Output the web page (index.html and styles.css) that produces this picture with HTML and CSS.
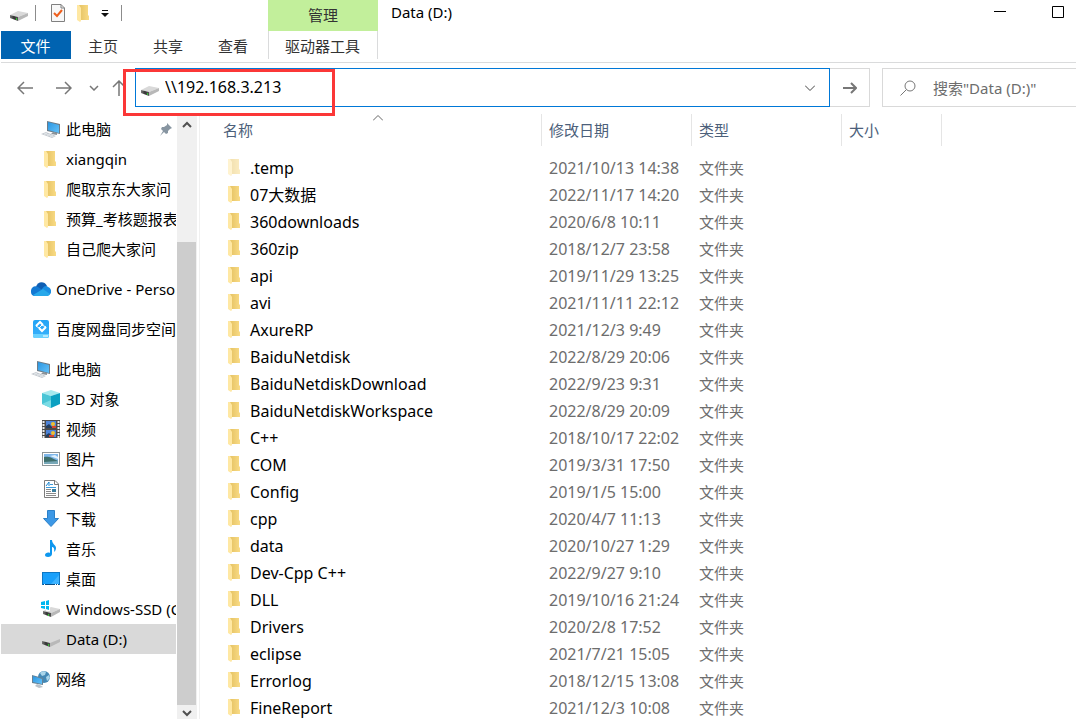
FILE: index.html
```html
<!doctype html>
<html lang="zh-CN">
<head>
    <title>Data (D:)</title>
    <meta charset="utf-8"/>
    <meta name="viewport" content="width=device-width, initial-scale=1"/>
    <link rel="stylesheet" href="styles.css">
</head>
<body>

<!-- shared icons -->
<svg class="sprite" aria-hidden="true">
    <defs>
        <linearGradient id="folderBack" x1="0" x2="1" y1="0" y2="0">
            <stop offset="0.2" stop-color="#e9c769"/>
            <stop offset="1" stop-color="#f9db85"/>
        </linearGradient>
        <linearGradient id="screen" x1="0" x2="1" y1="0" y2="1">
            <stop offset="0" stop-color="#2b95e0"/>
            <stop offset="1" stop-color="#63c2fa"/>
        </linearGradient>
        <linearGradient id="baidu" x1="0" x2="0" y1="0" y2="1">
            <stop offset="0" stop-color="#22a4f5"/>
            <stop offset="1" stop-color="#39b0fb"/>
        </linearGradient>
        <linearGradient id="driveFront" x1="0" x2="1" y1="0" y2="0">
            <stop offset="0" stop-color="#777"/>
            <stop offset="0.5" stop-color="#333"/>
            <stop offset="1" stop-color="#555"/>
        </linearGradient>
    </defs>
    <symbol id="folder" viewBox="0 0 12 17">
        <path d="M2 0H11V10L12 11V15H2Z" fill="url(#folderBack)"/>
        <path d="M0 0H2L4 3V16L3 17L0 15Z" fill="#ffe8a3"/>
    </symbol>
    <symbol id="drive" viewBox="0 0 20 20">
        <path d="M1 12L9 8L19 10L9 14Z" fill="#d9d9d9"/>
        <path d="M9 14L19 10V13L9 18Z" fill="#b8b8b8"/>
        <path d="M1 12L9 14V18L1 15Z" fill="url(#driveFront)"/>
        <path d="M7 15H8V17H7Z" fill="#32c932"/>
    </symbol>
    <symbol id="pc" viewBox="0 0 20 20">
        <path d="M6 2L19 5V15L6 12Z" fill="#6e7b86"/>
        <path d="M7 3L18 6V14L7 11Z" fill="url(#screen)"/>
        <path d="M12 13L16 14V16L10 15Z" fill="#8a9299"/>
        <path d="M0 15L5 13L15 17L11 19Z" fill="#c5cad0"/>
        <path d="M3 14L13 18M6 14L3 16M9 15L6 17M12 16L9 18" stroke="#eff2f4" stroke-width=".6" fill="none"/>
    </symbol>
</svg>

<div class="window">
    <header class="ribbon">
        <div class="ribbon-left">
            <div class="quick-access">
                <svg class="icon" viewBox="0 0 20 20"><use href="#drive"/></svg>
                <span class="divider"></span>
                <button class="qa-button" aria-label="属性">
                    <svg width="14" height="18" viewBox="0 0 14 18">
                        <path d="M.5 .5H10L13.500 4V17.500H.5Z" fill="#f8f8f8" stroke="#808080"/>
                        <path d="M10 .5V4H13.500" fill="none" stroke="#808080"/>
                        <path d="M3 9L6 12L11 6" fill="none" stroke="#ee5f1d" stroke-width="2"/>
                    </svg>
                </button>
                <button class="qa-button" aria-label="新建文件夹">
                    <svg class="folder" viewBox="0 0 12 17"><use href="#folder"/></svg>
                </button>
                <button class="qa-button" aria-label="自定义快速访问工具栏">
                    <svg width="8" height="8" viewBox="0 0 8 8">
                        <path d="M1 1.500H7" stroke="#111"/>
                        <path d="M0 4H8L4 8Z" fill="#111"/>
                    </svg>
                </button>
                <span class="divider divider-end"></span>
            </div>
            <nav class="tabs">
                <button class="tab tab-file">文件</button>
                <button class="tab">主页</button>
                <button class="tab">共享</button>
                <button class="tab">查看</button>
            </nav>
        </div>
        <div class="context">
            <div class="context-title">管理</div>
            <button class="tab tab-context">驱动器工具</button>
        </div>
        <div class="title">Data (D:)</div>
        <div class="window-buttons">
            <button aria-label="最小化"><svg width="12" height="12" viewBox="0 0 12 12"><path d="M0 5.500H12" stroke="#000"/></svg></button>
            <button aria-label="最大化"><svg width="12" height="12" viewBox="0 0 12 12"><path d="M.5 .5H11.500V11.500H.5Z" fill="none" stroke="#000"/></svg></button>
        </div>
    </header>

    <div class="toolbar">
        <div class="nav-buttons">
            <button aria-label="后退"><svg width="16" height="14" viewBox="0 0 16 14"><path d="M16 7H1M7 1L1 7L7 13" fill="none" stroke="#777" stroke-width="1.500"/></svg></button>
            <button aria-label="前进"><svg width="16" height="14" viewBox="0 0 16 14"><path d="M0 7H15M9 1L15 7L9 13" fill="none" stroke="#777" stroke-width="1.500"/></svg></button>
            <button aria-label="最近浏览的位置"><svg width="10" height="6" viewBox="0 0 10 6"><path d="M1 1L5 5L9 1" fill="none" stroke="#777" stroke-width="1.500"/></svg></button>
            <button aria-label="上移"><svg width="14" height="16" viewBox="0 0 14 16"><path d="M7 16V1M1 7L7 1L13 7" fill="none" stroke="#777" stroke-width="1.500"/></svg></button>
        </div>
        <div class="address">
            <svg class="icon" viewBox="0 0 20 20"><use href="#drive"/></svg>
            <input type="text" aria-label="地址" value="\\192.168.3.213">
            <button class="address-drop" aria-label="以前的位置"><svg width="10" height="6" viewBox="0 0 10 6"><path d="M0 .5L5 5.500L10 .5" fill="none" stroke="#444"/></svg></button>
            <div class="highlight"></div>
        </div>
        <button class="go" aria-label="转到"><svg width="14" height="12" viewBox="0 0 14 12"><path d="M0 6H13M8 1L13 6L8 11" fill="none" stroke="#777" stroke-width="2"/></svg></button>
        <label class="search">
            <svg width="16" height="16" viewBox="0 0 16 16"><circle cx="10" cy="6" r="5" fill="none" stroke="#777"/><path d="M6.500 9.500L.5 15.500" stroke="#777"/></svg>
            <input type="text" aria-label="搜索" placeholder='搜索"Data (D:)"'>
        </label>
    </div>

    <main class="content">
        <nav class="sidebar">
            <ul class="tree">
                <li class="sub"><a href="#"><svg class="icon" viewBox="0 0 20 20"><use href="#pc"/></svg>此电脑</a>
                    <svg class="pin" width="12" height="13" viewBox="0 0 12 13"><path d="M7 0L12 5L10 6L8 8V10L6 11L4 9L0 13L3 8L1 6L2 4H4L7 2Z" fill="#8795a1"/></svg>
                </li>
                <li class="sub"><a href="#"><svg class="folder" viewBox="0 0 12 17"><use href="#folder"/></svg>xiangqin</a></li>
                <li class="sub"><a href="#"><svg class="folder" viewBox="0 0 12 17"><use href="#folder"/></svg>爬取京东大家问</a></li>
                <li class="sub"><a href="#"><svg class="folder" viewBox="0 0 12 17"><use href="#folder"/></svg>预算_考核题报表</a></li>
                <li class="sub"><a href="#"><svg class="folder" viewBox="0 0 12 17"><use href="#folder"/></svg>自己爬大家问</a></li>
            </ul>
            <ul class="tree">
                <li><a href="#"><svg class="icon" viewBox="0 0 20 20">
                    <path d="M5 8C6 3 13 1 16 7L10 12Z" fill="#0f5fb4"/>
                    <path d="M0 13C-.5 9 3 6 7 8L13 12L4 17C1 17 0 15 0 13Z" fill="#1379d3"/>
                    <path d="M11 10C14 6 16 7 17 8C21 9 21 15 18 16L9 13Z" fill="#198de2"/>
                    <path d="M2 16L12 10L19 15C18 17 17 17 16 17H4C3 17 2 16 2 16Z" fill="#28a8ea"/>
                </svg>OneDrive - Personal</a></li>
            </ul>
            <ul class="tree">
                <li><a href="#"><svg class="icon" viewBox="0 0 20 20">
                    <rect x="2" y="1" width="16" height="18" rx="2" fill="url(#baidu)"/>
                    <path d="M2 15H18V17Q18 19 16 19H4Q2 19 2 17Z" fill="#69d1ff"/>
                    <path d="M12 17H17" stroke="#fff"/>
                    <path d="M5 7L9 3L12 6M15 8L11 12L8 9" fill="none" stroke="#fff" stroke-width="2"/>
                    <path d="M5 7L8 9L11 6L15 8" fill="none" stroke="#fff"/>
                </svg>百度网盘同步空间</a></li>
            </ul>
            <ul class="tree">
                <li><a href="#"><svg class="icon" viewBox="0 0 20 20"><use href="#pc"/></svg>此电脑</a></li>
                <li class="sub"><a href="#"><svg class="icon" viewBox="0 0 20 20">
                    <path d="M1 4L10 1L19 4L10 7Z" fill="#a6e9ee"/>
                    <path d="M1 4L10 7V19L1 15Z" fill="#49c5d6"/>
                    <path d="M10 7L19 4V15L10 19Z" fill="#0ba0c1"/>
                    <path d="M1 15L10 11V19Z" fill="#7bdce5"/>
                </svg>3D 对象</a></li>
                <li class="sub"><a href="#"><svg class="icon" viewBox="0 0 20 20">
                    <rect x="1" y="1" width="18" height="18" fill="#4b4b4b"/>
                    <path d="M2.500 2V19M17.500 2V19" stroke="#eee" stroke-width="2" stroke-dasharray="2 1"/>
                    <path d="M5 2H15V9H5ZM5 11H15V18H5Z" fill="#4d83d8"/>
                    <path d="M5 7L8 5L12 9H5ZM5 16L8 14L12 18H5Z" fill="#253e5e"/>
                    <circle cx="12" cy="5" r="2" fill="#f0c02d"/><circle cx="12" cy="14" r="2" fill="#f0c02d"/>
                    <path d="M11 7H15V9H11ZM8 16H13V18H8Z" fill="#d6452f"/>
                </svg>视频</a></li>
                <li class="sub"><a href="#"><svg class="icon" viewBox="0 0 20 20">
                    <rect x="1.500" y="3.500" width="17" height="13" fill="#fff" stroke="#8f9699"/>
                    <path d="M3 5H17V15H3Z" fill="#7fb7ea"/>
                    <path d="M3 8C7 7 10 8 17 12V13H3Z" fill="#3e6f6c"/>
                    <path d="M3 13L17 12V15H3Z" fill="#78a8b8"/>
                    <path d="M9 7L14 6L17 8V10Z" fill="#e1f1fc"/>
                </svg>图片</a></li>
                <li class="sub"><a href="#"><svg class="icon" viewBox="0 0 20 20">
                    <path d="M3.500 1.500H14L17.500 5V18.500H3.500Z" fill="#fff" stroke="#7c7c7c"/>
                    <path d="M13.500 2V5.500H17" fill="none" stroke="#7c7c7c"/>
                    <path d="M5 7L8 3V7" fill="none" stroke="#1b86d1"/>
                    <path d="M9 5.500H12M5 8.500H15" stroke="#3a9bdc"/>
                    <path d="M5 10.500H10M5 12.500H10M5 14.500H15M5 16.500H15" stroke="#8a8a8a"/>
                    <path d="M11 10H15V13H11Z" fill="#3b7e9d"/>
                </svg>文档</a></li>
                <li class="sub"><a href="#"><svg class="icon" viewBox="0 0 20 20">
                    <path d="M6.500 1.500H13.500V9.500H17.500L10 17.500L2.500 9.500H6.500Z" fill="#3c98e6" stroke="#2b80c9"/>
                </svg>下载</a></li>
                <li class="sub"><a href="#"><svg class="icon" viewBox="0 0 20 20">
                    <path d="M9 1H11C11 5 15 6 15 9C15 11 14 12 13 13C14 9 12 8 11 8V15C11 17 9 18 7 18C5 18 4 17 4 16C4 14 7 13 9 14Z" fill="#0e97ee"/>
                </svg>音乐</a></li>
                <li class="sub"><a href="#"><svg class="icon" viewBox="0 0 20 20">
                    <rect x="1.500" y="3.500" width="17" height="12" fill="#19a0fb" stroke="#0d77c4"/>
                    <path d="M10 15L18 6V15Z" fill="#3eb3ff"/>
                    <path d="M2 15.500H18" stroke="#0b4f85"/>
                    <path d="M3 15.500H4M14 15.500H15M16 15.500H17" stroke="#fff"/>
                </svg>桌面</a></li>
                <li class="sub"><a href="#"><svg class="icon" viewBox="0 0 20 20">
                    <path d="M2 12L10 8L19 10L10 14Z" fill="#d9d9d9"/>
                    <path d="M10 14L19 10V13L10 18Z" fill="#b8b8b8"/>
                    <path d="M2 12L10 14V18L2 15Z" fill="url(#driveFront)"/>
                    <path d="M7 15H8V17H7Z" fill="#32c932"/>
                    <path d="M0 2H4V6H0ZM5 1H9V6H5ZM0 7H4V11H0ZM5 7H9V12H5Z" fill="#fff"/>
                    <path d="M0 3L4 2V6H0ZM5 2L8 1V6H5ZM0 7H4V10L0 9ZM5 7H8V11L5 10Z" fill="#00b7f0"/>
                </svg>Windows-SSD (C:)</a></li>
                <li class="sub selected"><a href="#"><svg class="icon" viewBox="0 0 20 20"><use href="#drive"/></svg>Data (D:)</a></li>
            </ul>
            <ul class="tree">
                <li><a href="#"><svg class="icon" viewBox="0 0 20 20">
                    <circle cx="13" cy="8" r="6" fill="#4388b5"/>
                    <path d="M9 4C11 2 14 2 15 3L14 6L11 7ZM15 8L18 6L19 9L16 12Z" fill="#a9d5ea"/>
                    <path d="M1 6L12 9V16L1 14Z" fill="#668296"/>
                    <path d="M2 7L11 10V15L2 13Z" fill="url(#screen)"/>
                    <path d="M6 15L9 16L12 18L8 19L4 17Z" fill="#b9c2c9"/>
                </svg>网络</a></li>
            </ul>
        </nav>

        <div class="scrollbar">
            <button aria-label="向上滚动"><svg width="10" height="7" viewBox="0 0 10 7"><path d="M1 6L5 2L9 6" fill="none" stroke="#505050" stroke-width="2"/></svg></button>
            <div class="track"><div class="thumb"></div></div>
            <button aria-label="向下滚动"><svg width="10" height="7" viewBox="0 0 10 7"><path d="M1 1L5 5L9 1" fill="none" stroke="#505050" stroke-width="2"/></svg></button>
        </div>

        <section class="files">
            <table>
                <colgroup>
                    <col class="col-name"><col class="col-date"><col class="col-type"><col class="col-size"><col>
                </colgroup>
                <thead>
                    <tr>
                        <th>名称<svg class="sort" width="10" height="6" viewBox="0 0 10 6"><path d="M0 5.500L5 .5L10 5.500" fill="none" stroke="#666"/></svg></th>
                        <th>修改日期</th><th>类型</th><th>大小</th><td></td>
                    </tr>
                </thead>
                <tbody>
                    <tr class="hidden-file"><td><svg class="folder" viewBox="0 0 12 17"><use href="#folder"/></svg>.temp</td><td>2021/10/13 14:38</td><td>文件夹</td></tr>
                    <tr><td><svg class="folder" viewBox="0 0 12 17"><use href="#folder"/></svg>07大数据</td><td>2022/11/17 14:20</td><td>文件夹</td></tr>
                    <tr><td><svg class="folder" viewBox="0 0 12 17"><use href="#folder"/></svg>360downloads</td><td>2020/6/8 10:11</td><td>文件夹</td></tr>
                    <tr><td><svg class="folder" viewBox="0 0 12 17"><use href="#folder"/></svg>360zip</td><td>2018/12/7 23:58</td><td>文件夹</td></tr>
                    <tr><td><svg class="folder" viewBox="0 0 12 17"><use href="#folder"/></svg>api</td><td>2019/11/29 13:25</td><td>文件夹</td></tr>
                    <tr><td><svg class="folder" viewBox="0 0 12 17"><use href="#folder"/></svg>avi</td><td>2021/11/11 22:12</td><td>文件夹</td></tr>
                    <tr><td><svg class="folder" viewBox="0 0 12 17"><use href="#folder"/></svg>AxureRP</td><td>2021/12/3 9:49</td><td>文件夹</td></tr>
                    <tr><td><svg class="folder" viewBox="0 0 12 17"><use href="#folder"/></svg>BaiduNetdisk</td><td>2022/8/29 20:06</td><td>文件夹</td></tr>
                    <tr><td><svg class="folder" viewBox="0 0 12 17"><use href="#folder"/></svg>BaiduNetdiskDownload</td><td>2022/9/23 9:31</td><td>文件夹</td></tr>
                    <tr><td><svg class="folder" viewBox="0 0 12 17"><use href="#folder"/></svg>BaiduNetdiskWorkspace</td><td>2022/8/29 20:09</td><td>文件夹</td></tr>
                    <tr><td><svg class="folder" viewBox="0 0 12 17"><use href="#folder"/></svg>C++</td><td>2018/10/17 22:02</td><td>文件夹</td></tr>
                    <tr><td><svg class="folder" viewBox="0 0 12 17"><use href="#folder"/></svg>COM</td><td>2019/3/31 17:50</td><td>文件夹</td></tr>
                    <tr><td><svg class="folder" viewBox="0 0 12 17"><use href="#folder"/></svg>Config</td><td>2019/1/5 15:00</td><td>文件夹</td></tr>
                    <tr><td><svg class="folder" viewBox="0 0 12 17"><use href="#folder"/></svg>cpp</td><td>2020/4/7 11:13</td><td>文件夹</td></tr>
                    <tr><td><svg class="folder" viewBox="0 0 12 17"><use href="#folder"/></svg>data</td><td>2020/10/27 1:29</td><td>文件夹</td></tr>
                    <tr><td><svg class="folder" viewBox="0 0 12 17"><use href="#folder"/></svg>Dev-Cpp C++</td><td>2022/9/27 9:10</td><td>文件夹</td></tr>
                    <tr><td><svg class="folder" viewBox="0 0 12 17"><use href="#folder"/></svg>DLL</td><td>2019/10/16 21:24</td><td>文件夹</td></tr>
                    <tr><td><svg class="folder" viewBox="0 0 12 17"><use href="#folder"/></svg>Drivers</td><td>2020/2/8 17:52</td><td>文件夹</td></tr>
                    <tr><td><svg class="folder" viewBox="0 0 12 17"><use href="#folder"/></svg>eclipse</td><td>2021/7/21 15:05</td><td>文件夹</td></tr>
                    <tr><td><svg class="folder" viewBox="0 0 12 17"><use href="#folder"/></svg>Errorlog</td><td>2018/12/15 13:08</td><td>文件夹</td></tr>
                    <tr><td><svg class="folder" viewBox="0 0 12 17"><use href="#folder"/></svg>FineReport</td><td>2021/12/3 10:08</td><td>文件夹</td></tr>
                </tbody>
            </table>
        </section>
    </main>
</div>
</body>
</html>
```
FILE: styles.css
```css
* {
    box-sizing: border-box;
}
body {
    margin: 0;
    background: #fff;
    color: #000;
    font: 15px/20px "Noto Sans", "Noto Sans CJK SC", sans-serif;
}
button {
    padding: 0;
    border: 0;
    background: none;
    color: inherit;
    font: inherit;
}
svg {
    display: block;
    flex: none;
}
a {
    color: inherit;
    text-decoration: none;
}
.sprite {
    position: absolute;
    width: 0;
    height: 0;
}
.icon {
    width: 20px;
    height: 20px;
}
.folder {
    width: 12px;
    height: 17px;
}
.window {
    display: flex;
    flex-direction: column;
    height: 100vh;
    padding-left: 1px;
    overflow: hidden;
}

/* title bar and ribbon tabs */
.ribbon {
    display: flex;
    flex: none;
    height: 63px;
    border-bottom: 1px solid #dadbdc;
}
.ribbon-left {
    width: 267px;
}
.quick-access {
    display: flex;
    align-items: center;
    height: 31px;
    padding: 0 0 5px 8px;
}
.divider {
    width: 1px;
    height: 16px;
    margin: 0 15px 0 6px;
    background: #8c8c8c;
}
.divider-end {
    margin: 0;
}
.qa-button {
    margin-right: 12px;
}
.tabs {
    display: flex;
}
.tab {
    width: 65px;
    height: 28px;
    padding: 1px 1px 0 0;
    color: #333;
}
.tab-file {
    width: 70px;
    background: #0063b1;
    color: #fff;
}
.context {
    width: 110px;
    text-align: center;
}
.context-title {
    height: 31px;
    background: #c2ef9b;
    color: #333;
    line-height: 31px;
}
.tab-context {
    width: 100%;
    border: solid #dadbdc;
    border-width: 0 1px;
}
.title {
    flex: 1;
    padding: 2px 13px;
}
.window-buttons {
    display: flex;
    height: 24px;
}
.window-buttons button {
    display: flex;
    align-items: center;
    justify-content: center;
    width: 46px;
}
.window-buttons button:last-child {
    justify-content: flex-end;
    width: 41px;
    margin-right: 12px;
}

/* navigation and address */
.toolbar {
    display: flex;
    flex: none;
    height: 51px;
    padding: 5px 0 6px;
}
.nav-buttons {
    display: flex;
    align-items: center;
    width: 134px;
    padding-left: 16px;
}
.nav-buttons button:nth-child(1) {
    margin-right: 23px;
}
.nav-buttons button:nth-child(2) {
    margin-right: 17px;
}
.nav-buttons button:nth-child(3) {
    margin-right: 13px;
}
.address {
    position: relative;
    display: flex;
    align-items: center;
    flex: 1;
    height: 39px;
    padding-left: 4px;
    border: 1px solid #0078d7;
}
input {
    flex: 1;
    min-width: 0;
    padding: 0;
    border: 0;
    outline: 0;
    background: none;
    font: inherit;
}
.address input {
    margin-left: 5px;
    padding-bottom: 2px;
    font-size: 16px;
}
.address-drop {
    padding: 12px 14px;
}
.highlight {
    position: absolute;
    top: 0;
    left: -13px;
    width: 212px;
    height: 47px;
    border: 3px solid #fb3737;
}
.go {
    display: flex;
    align-items: center;
    justify-content: center;
    width: 40px;
    height: 39px;
    border: 1px solid #d9d9d9;
    border-left: 0;
}
.search {
    display: flex;
    align-items: center;
    width: 194px;
    height: 39px;
    margin-left: 12px;
    padding-left: 17px;
    border: 1px solid #d9d9d9;
    border-right: 0;
}
.search input {
    margin-left: 17px;
}
.search input::placeholder {
    color: #6d6d6d;
    opacity: 1;
}

/* folder tree */
.content {
    display: flex;
    flex: 1;
    min-height: 0;
}
.sidebar {
    flex: none;
    width: 175px;
    overflow: hidden;
}
.tree {
    margin: 0 0 10px;
    padding: 0;
    list-style: none;
}
.tree li {
    display: flex;
    align-items: center;
    height: 30px;
    padding-left: 30px;
    white-space: nowrap;
}
.tree .sub {
    padding-left: 40px;
}
.tree a {
    display: flex;
    align-items: center;
    gap: 5px;
}
.tree .folder {
    margin: 0 5px 0 3px;
}
.tree .selected {
    background: #d9d9d9;
}
.tree .pin {
    margin: 0 4px 0 auto;
}
.scrollbar {
    display: flex;
    flex-direction: column;
    flex: none;
    width: 20px;
    margin-left: 1px;
    padding-top: 2px;
    background: #f0f0f0;
}
.scrollbar button {
    display: flex;
    justify-content: center;
    align-items: center;
    height: 17px;
}
.scrollbar button:last-child {
    height: 14px;
    padding-top: 3px;
}
.track {
    display: flex;
    flex-direction: column;
    justify-content: flex-end;
    flex: 1;
}
.thumb {
    height: 81%;
    margin-right: 1px;
    background: #cdcdcd;
}

/* file list */
.files {
    flex: 1;
    min-width: 0;
    margin-left: 2px;
    padding-left: 15px;
    border-left: 1px solid #f0f0f0;
    overflow: hidden;
}
table {
    width: 100%;
    table-layout: fixed;
    border-collapse: separate;
    border-spacing: 0;
}
.col-name {
    width: 327px;
}
.col-date, .col-type {
    width: 150px;
}
.col-size {
    width: 100px;
}
th {
    position: relative;
    height: 32px;
    padding: 0 7px;
    border-right: 1px solid #e5e5e5;
    color: #4c607a;
    font-weight: 400;
    text-align: left;
}
th:first-child {
    padding-left: 8px;
}
.sort {
    position: absolute;
    top: 1px;
    left: calc(50% - 5px);
}
tbody::before {
    display: block;
    height: 8px;
    content: "";
}
tbody td {
    height: 27px;
    padding: 0 7px;
    color: #6d6d6d;
    white-space: nowrap;
}
tbody td:first-child {
    display: flex;
    align-items: center;
    gap: 10px;
    padding-left: 13px;
    color: #000;
    font-size: 16px;
}
tbody td:nth-child(2) {
    font-size: 16px;
}
.hidden-file .folder {
    opacity: 0.5;
}
```
